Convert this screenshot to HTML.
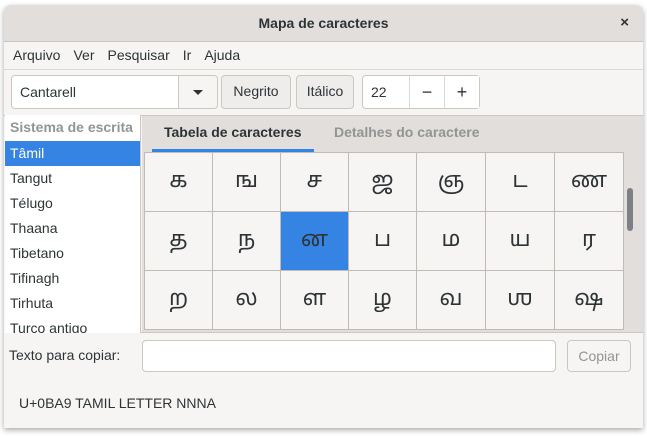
<!DOCTYPE html>
<html><head><meta charset="utf-8"><style>
*{box-sizing:border-box;margin:0;padding:0}
body{width:647px;height:436px;background:#fff;font-family:"Liberation Sans","DejaVu Sans",sans-serif;font-size:14px;color:#2e3436;position:relative;overflow:hidden}
.win{position:absolute;left:4px;top:5px;width:639px;height:423px;background:#f6f5f4;border-radius:7px 7px 0 0;box-shadow:0 2px 6px rgba(0,0,0,.35);overflow:hidden}
.title{position:absolute;left:0;top:0;width:639px;height:37px;background:#e1dedb;border-bottom:1px solid #c8c4bf;text-align:center;line-height:36px;font-weight:bold;font-size:14px}
.x{position:absolute;right:14px;top:0;font-size:15px;font-weight:bold}
.menu{position:absolute;top:37px;left:0;width:639px;height:28px;border-bottom:1px solid #dcd9d5;line-height:27px}
.menu span{margin-left:9px;margin-right:4px}
.abs{position:absolute}
.btn{position:absolute;border:1px solid #cdc7c2;border-radius:4px;background:#efedec;text-align:center;line-height:31px}
.list{position:absolute;left:1px;top:110px;width:136px;height:218px;background:#fff;border-right:1px solid #cdc7c2;overflow:hidden}
.list div{height:25px;line-height:25px;padding-left:5px}
.grid{position:absolute;left:141px;top:148px;border-left:1px solid #c0bbb6;border-top:1px solid #c0bbb6}
.c{position:absolute;border-right:1px solid #c0bbb6;border-bottom:1px solid #c0bbb6;text-align:center;font-family:"Noto Sans Tamil","Lohit Tamil","DejaVu Sans",sans-serif;font-size:22px;color:#2e3436}
</style></head><body>
<div class="win">
<div class="title">Mapa de caracteres<span class="x">×</span></div>
<div class="menu"><span>Arquivo</span><span>Ver</span><span>Pesquisar</span><span>Ir</span><span>Ajuda</span></div>
<div class="abs" style="left:7px;top:70px;width:207px;height:34px;background:#fff;border:1px solid #cdc7c2;border-radius:4px;line-height:32px;padding-left:8px">Cantarell</div>
<div class="abs" style="left:174px;top:71px;width:39px;height:32px;border-left:1px solid #cdc7c2;background:#f6f5f4;border-radius:0 4px 4px 0"><div style="position:absolute;left:14px;top:14px;border-left:5px solid transparent;border-right:5px solid transparent;border-top:5px solid #2e3436"></div></div>
<div class="btn" style="left:217px;top:70px;width:70px;height:34px">Negrito</div>
<div class="btn" style="left:292px;top:70px;width:58px;height:34px">Itálico</div>
<div class="abs" style="left:358px;top:70px;width:118px;height:34px;border:1px solid #cdc7c2;border-radius:4px;background:#fff"></div>
<div class="abs" style="left:367px;top:70px;line-height:34px">22</div>
<div class="abs" style="left:405px;top:71px;width:35px;height:32px;border-left:1px solid #dcd9d5;background:#fff;text-align:center;line-height:32px;font-size:18px">−</div>
<div class="abs" style="left:440px;top:71px;width:35px;height:32px;border-left:1px solid #dcd9d5;background:#fff;text-align:center;line-height:32px;font-size:18px">+</div>
<div class="abs" style="left:0;top:110px;width:639px;height:1px;background:#cdc7c2"></div>
<div class="list">
<div style="color:#929595;font-weight:bold;height:26px">Sistema de escrita</div>
<div style="background:#3584e4;color:#fff">Tâmil</div>
<div>Tangut</div><div>Télugo</div><div>Thaana</div><div>Tibetano</div><div>Tifinagh</div><div>Tirhuta</div><div>Turco antigo</div>
</div>
<div class="abs" style="left:138px;top:111px;width:501px;height:37px;background:#e1dedb"></div>
<div class="abs" style="left:160px;top:111px;font-weight:bold;line-height:33px">Tabela de caracteres</div>
<div class="abs" style="left:330px;top:111px;font-weight:bold;line-height:33px;color:#929595">Detalhes do caractere</div>
<div class="abs" style="left:148px;top:144px;width:162px;height:3px;background:#3584e4"></div>
<div class="abs" style="left:138px;top:148px;width:501px;height:180px;background:#e1dedb"></div>
<div class="abs" style="left:623px;top:183px;width:6px;height:43px;border-radius:3px;background:#7e8087"></div>
<div class="abs" style="left:137px;top:327px;width:502px;height:1px;background:#cdc7c2"></div>
<div id="g"></div>
<div class="abs" style="left:5px;top:335px;line-height:30px">Texto para copiar:</div>
<div class="abs" style="left:138px;top:335px;width:414px;height:32px;background:#fff;border:1px solid #cdc7c2;border-radius:4px"></div>
<div class="btn" style="left:563px;top:335px;width:64px;height:32px;color:#929595;background:#f6f5f4;line-height:30px">Copiar</div>
<div class="abs" style="left:15px;top:387px;line-height:22px">U+0BA9 TAMIL LETTER NNNA</div>
</div>
<div style="position:absolute;left:145px;top:153px">
<div class="c" style="left:0;top:0;width:68px;height:59px;line-height:59px;background:#f6f5f4">க</div>
<div class="c" style="left:68px;top:0;width:68px;height:59px;line-height:59px;background:#f6f5f4">ங</div>
<div class="c" style="left:136px;top:0;width:68px;height:59px;line-height:59px;background:#f6f5f4">ச</div>
<div class="c" style="left:204px;top:0;width:68px;height:59px;line-height:59px;background:#f6f5f4">ஜ</div>
<div class="c" style="left:272px;top:0;width:69px;height:59px;line-height:59px;background:#f6f5f4">ஞ</div>
<div class="c" style="left:341px;top:0;width:69px;height:59px;line-height:59px;background:#f6f5f4">ட</div>
<div class="c" style="left:410px;top:0;width:69px;height:59px;line-height:59px;background:#f6f5f4">ண</div>
<div class="c" style="left:0;top:59px;width:68px;height:59px;line-height:59px;background:#f6f5f4">த</div>
<div class="c" style="left:68px;top:59px;width:68px;height:59px;line-height:59px;background:#f6f5f4">ந</div>
<div class="c" style="left:136px;top:59px;width:68px;height:59px;line-height:59px;background:#3584e4">ன</div>
<div class="c" style="left:204px;top:59px;width:68px;height:59px;line-height:59px;background:#f6f5f4">ப</div>
<div class="c" style="left:272px;top:59px;width:69px;height:59px;line-height:59px;background:#f6f5f4">ம</div>
<div class="c" style="left:341px;top:59px;width:69px;height:59px;line-height:59px;background:#f6f5f4">ய</div>
<div class="c" style="left:410px;top:59px;width:69px;height:59px;line-height:59px;background:#f6f5f4">ர</div>
<div class="c" style="left:0;top:118px;width:68px;height:59px;line-height:59px;background:#f6f5f4">ற</div>
<div class="c" style="left:68px;top:118px;width:68px;height:59px;line-height:59px;background:#f6f5f4">ல</div>
<div class="c" style="left:136px;top:118px;width:68px;height:59px;line-height:59px;background:#f6f5f4">ள</div>
<div class="c" style="left:204px;top:118px;width:68px;height:59px;line-height:59px;background:#f6f5f4">ழ</div>
<div class="c" style="left:272px;top:118px;width:69px;height:59px;line-height:59px;background:#f6f5f4">வ</div>
<div class="c" style="left:341px;top:118px;width:69px;height:59px;line-height:59px;background:#f6f5f4">ஶ</div>
<div class="c" style="left:410px;top:118px;width:69px;height:59px;line-height:59px;background:#f6f5f4">ஷ</div>
<div style="position:absolute;left:-1px;top:-1px;width:480px;height:1px;background:#c0bbb6"></div>
<div style="position:absolute;left:-1px;top:-1px;width:1px;height:178px;background:#c0bbb6"></div>
</div>
</body></html>
